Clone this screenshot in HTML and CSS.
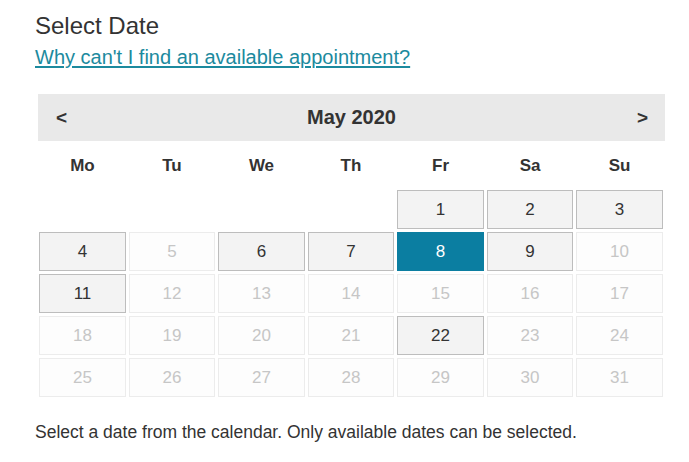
FILE: index.html
```html
<!DOCTYPE html>
<html>
<head>
<meta charset="utf-8">
<link rel="stylesheet" href="styles.css">
</head>
<body>
<div class="page">
  <h1 class="title">Select Date</h1>
  <a class="help" href="#">Why can't I find an available appointment?</a>
  <div class="calendar">
    <div class="cal-head">
      <span class="nav">&lt;</span>
      <span class="month">May 2020</span>
      <span class="nav">&gt;</span>
    </div>
    <div class="grid">
      <div class="dow">Mo</div><div class="dow">Tu</div><div class="dow">We</div><div class="dow">Th</div><div class="dow">Fr</div><div class="dow">Sa</div><div class="dow">Su</div>
      <div class="empty"></div><div class="empty"></div><div class="empty"></div><div class="empty"></div>
      <div class="day avail">1</div><div class="day avail">2</div><div class="day avail">3</div>
      <div class="day avail">4</div><div class="day off">5</div><div class="day avail">6</div><div class="day avail">7</div><div class="day sel">8</div><div class="day avail">9</div><div class="day off">10</div>
      <div class="day avail">11</div><div class="day off">12</div><div class="day off">13</div><div class="day off">14</div><div class="day off">15</div><div class="day off">16</div><div class="day off">17</div>
      <div class="day off">18</div><div class="day off">19</div><div class="day off">20</div><div class="day off">21</div><div class="day avail">22</div><div class="day off">23</div><div class="day off">24</div>
      <div class="day off">25</div><div class="day off">26</div><div class="day off">27</div><div class="day off">28</div><div class="day off">29</div><div class="day off">30</div><div class="day off">31</div>
    </div>
  </div>
  <p class="note">Select a date from the calendar. Only available dates can be selected.</p>
</div>
</body>
</html>
```
FILE: styles.css
```css
html, body {
  margin: 0;
  padding: 0;
  background: #fff;
}
body {
  font-family: "Liberation Sans", Arial, sans-serif;
  color: #333;
}
.page {
  padding: 12px 0 0 35px;
}
.title {
  margin: 0;
  font-size: 24px;
  font-weight: normal;
  line-height: 28px;
  color: #333;
}
.help {
  display: inline-block;
  margin-top: 6px;
  font-size: 20px;
  line-height: 23px;
  color: #1c8a9e;
  text-decoration: underline;
  text-underline-offset: 2px;
}
.calendar {
  margin: 25px 0 0 3px;
  width: 627px;
}
.cal-head {
  display: flex;
  align-items: center;
  justify-content: space-between;
  height: 47px;
  background: #e9e9e9;
  padding: 0 18px 0 18px;
  box-sizing: border-box;
  font-weight: bold;
  color: #333;
}
.nav {
  font-size: 19px;
  width: 10px;
}
.month {
  font-size: 20px;
}
.grid {
  display: grid;
  grid-template-columns: repeat(7, 1fr);
  grid-template-rows: 46px;
  grid-auto-rows: 39px;
  gap: 3px 2.6px;
  padding: 0 2px 0 1px;
}
.dow {
  display: flex;
  align-items: center;
  justify-content: center;
  padding-top: 3px;
  font-weight: bold;
  font-size: 17px;
  color: #333;
}
.day {
  display: flex;
  align-items: center;
  justify-content: center;
  font-size: 17px;
  box-sizing: border-box;
  border: 1px solid;
}
.avail {
  background: #f3f3f3;
  border-color: #bdbdbd;
  color: #333;
}
.off {
  background: #fdfdfd;
  border-color: #ececec;
  color: #c6c6c6;
}
.sel {
  background: #0b7ea1;
  border-color: #0b7ea1;
  color: #fff;
}
.note {
  margin: 25px 0 0;
  font-size: 17.5px;
  line-height: 20px;
  color: #333;
}
```
